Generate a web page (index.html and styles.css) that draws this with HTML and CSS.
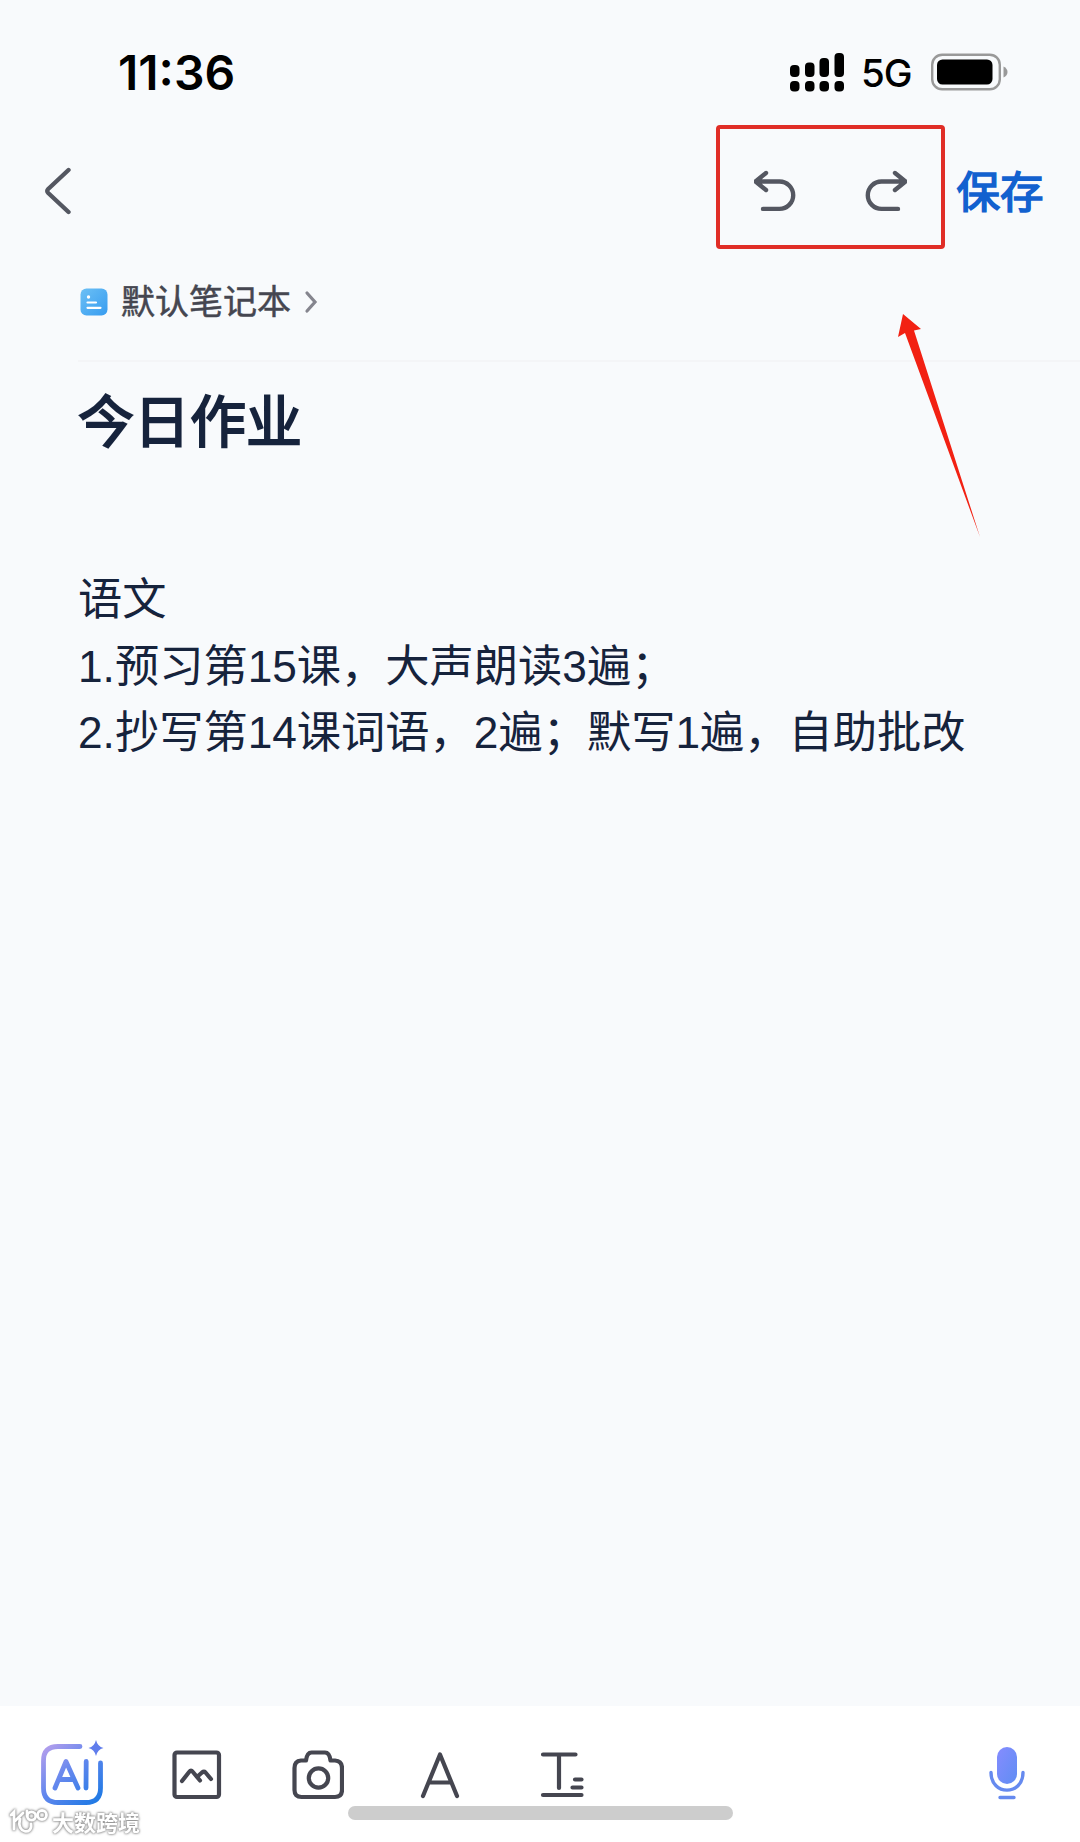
FILE: index.html
```html
<!DOCTYPE html>
<html lang="zh-CN">
  <head>
    <meta charset="UTF-8" />
    <meta name="viewport" content="width=device-width, initial-scale=1.0" />
    <link rel="stylesheet" href="styles.css">
    <title>今日作业</title>
  </head>
  <body>
    <div class="screen">
      <div class="status-bar">
        <span class="time">11:36</span>
        <div class="status-icons">
          <svg class="signal" width="54" height="39" viewBox="0 0 54 39">
            <rect x="0" y="12" width="9.500" height="12" rx="4" />
            <rect x="15" y="9.500" width="9.500" height="14.500" rx="4" />
            <rect x="29.500" y="5" width="9.500" height="19" rx="4" />
            <rect x="44.500" y="0" width="9.500" height="24" rx="4" />
            <rect x="0" y="28" width="9.500" height="10.500" rx="4" />
            <rect x="15" y="28" width="9.500" height="10.500" rx="4" />
            <rect x="29.500" y="28" width="9.500" height="10.500" rx="4" />
            <rect x="44.500" y="28" width="9.500" height="10.500" rx="4" />
          </svg>
          <span class="network">5G</span>
          <svg class="battery" width="77" height="38" viewBox="0 0 77 38">
            <rect x="1.200" y="1.700" width="67.600" height="34.600" rx="10" fill="none" stroke="#999" stroke-width="2.400" />
            <rect x="6" y="6.500" width="55.500" height="25" rx="5.500" />
            <path d="M72.500 13.500q4 2 4 5.500t-4 5.500z" fill="#999" />
          </svg>
        </div>
      </div>

      <div class="nav-bar">
        <button class="icon-button back">
          <svg width="28" height="48" viewBox="0 0 28 48">
            <path d="M24.500 3L4.200 22q-2 2 0 4L24.500 45" />
          </svg>
        </button>
        <div class="history">
          <button class="icon-button">
            <svg width="42" height="42" viewBox="0 0 42 42">
              <path d="M12 3L1.500 11.500L12 20M1.500 11.500H25.500a13.700 13.700 0 0 1 0 27.400H9" />
            </svg>
          </button>
          <button class="icon-button">
            <svg width="42" height="42" viewBox="0 0 42 42">
              <path d="M30 3L40.500 11.500L30 20M40.500 11.500H16.500a13.700 13.700 0 0 0 0 27.400H33" />
            </svg>
          </button>
        </div>
        <button class="save">保存</button>
      </div>

      <div class="notebook">
        <svg width="28" height="28" viewBox="0 0 28 28">
          <defs>
            <linearGradient id="book" x1="0" y1="0" x2="1" y2="1">
              <stop offset="0" stop-color="#6cc0f5" />
              <stop offset="1" stop-color="#379cf0" />
            </linearGradient>
          </defs>
          <rect x="0.500" y="0.500" width="27" height="27" rx="6" fill="url(#book)" />
          <circle cx="8.500" cy="9" r="1.700" fill="#fff" />
          <path d="M7.500 14.500H16M7.500 19.800H20.500" stroke="#fff" stroke-width="2.200" stroke-linecap="round" />
        </svg>
        <span class="notebook-name">默认笔记本</span>
        <svg width="14" height="24" viewBox="0 0 14 24">
          <path d="M3 3L11 12L3 21" fill="none" stroke="#85858e" stroke-width="3.200" stroke-linecap="round" />
        </svg>
      </div>

      <div class="note">
        <h1>今日作业</h1>
        <div class="content">
          <p>语文</p>
          <p>1.预习第15课，大声朗读3遍；</p>
          <p>2.抄写第14课词语，2遍；默写1遍，自助批改</p>
        </div>
      </div>

      <div class="toolbar">
        <div class="tools">
          <svg class="ai" width="64" height="68" viewBox="0 0 64 68">
            <defs>
              <linearGradient id="ai" gradientUnits="userSpaceOnUse" x1="4" y1="4" x2="58" y2="64">
                <stop offset="0" stop-color="#b9a0ec" />
                <stop offset="0.450" stop-color="#6688ee" />
                <stop offset="1" stop-color="#1c79e4" />
              </linearGradient>
            </defs>
            <g fill="none" stroke="url(#ai)" stroke-width="4.800" stroke-linecap="round" stroke-linejoin="round">
              <path d="M40 6.500H18Q3.500 6.500 3.500 21V48Q3.500 62.500 18 62.500H46Q60.500 62.500 60.500 48V23" />
              <path d="M15 48L26 21.500L38 48M19 39.500H34M46.200 21.500L46 48" />
            </g>
            <path d="M56 0q1.500 6.500 7.500 8q-6 1.500-7.500 8q-1.500-6.500-7.500-8q6-1.500 7.500-8z" fill="#607dec" />
          </svg>
          <svg width="50" height="50" viewBox="0 0 50 50">
            <rect x="2.500" y="2.500" width="44.500" height="44.500" rx="2.500" />
            <path d="M10 31L17.500 21.500Q19 19.500 20.500 21.500L28 30.500M25.500 26.500L30 22.500Q32 21 33.500 22.500L39 29" />
          </svg>
          <svg width="52" height="50" viewBox="0 0 52 50">
            <path d="M9 10.500H14Q15 2.500 19.500 2.500H33Q37.500 2.500 38.500 10.500H43Q50 11 50 18V40Q50 47 43 47H9.500Q2.500 47 2.500 40V18Q2.500 11 9 10.500z" />
            <circle cx="26.500" cy="28" r="9.700" />
          </svg>
          <svg width="40" height="50" viewBox="0 0 40 50">
            <path d="M3 46L20 4.500L37 46M9 32.500H31" />
          </svg>
          <svg width="44" height="50" viewBox="0 0 44 50">
            <path d="M3 4.500H35.500M19 4.500V38M3 45H41.500M35 29.500H41.500M32.500 37.500H41.500" />
          </svg>
        </div>
        <svg class="mic" width="38" height="56" viewBox="0 0 38 56">
          <defs>
            <linearGradient id="mic" x1="0" y1="0" x2="1" y2="1">
              <stop offset="0" stop-color="#858cff" />
              <stop offset="1" stop-color="#608df3" />
            </linearGradient>
          </defs>
          <rect x="9" y="1" width="20" height="37" rx="10" fill="url(#mic)" />
          <path d="M3 26.500C3 50 35 50 35 26.500M12 51.500H26" fill="none" stroke="#668aef" stroke-width="3.400" stroke-linecap="round" />
        </svg>
        <div class="home-indicator"></div>
      </div>

      <!-- pointer to the undo / redo buttons -->
      <svg class="pointer" width="84" height="226" viewBox="0 0 84 226">
        <path d="M5 0L23 15L16 16.500L82 223L7 19L0 23z" fill="#f22113" />
      </svg>

      <div class="watermark">
        <svg width="41" height="26" viewBox="0 0 41 26">
          <g fill="none" stroke-linecap="round">
            <path d="M2 7L5 4V21M14 5L6 13M11 11C7 26 24 27 22 16M18 3V8" />
            <circle cx="22.500" cy="8" r="4.200" />
            <circle cx="33" cy="7" r="4.500" />
          </g>
        </svg>
        <span>大数跨境</span>
      </div>
    </div>
  </body>
</html>
```

FILE: styles.css
```css
* {
  box-sizing: border-box;
}

body {
  margin: 0;
  font-family: "Liberation Sans", "Noto Sans CJK SC", sans-serif;
  background: #f8fafc;
}

h1,
p {
  margin: 0;
}

button {
  padding: 0;
  border: none;
  background: none;
  font-family: inherit;
}

svg {
  display: block;
  flex-shrink: 0;
}

.screen {
  position: relative;
  display: flex;
  flex-direction: column;
  width: 1080px;
  height: 1842px;
  overflow: hidden;
}

.status-bar {
  display: flex;
  align-items: center;
  justify-content: space-between;
  height: 125px;
  padding: 19px 72px 0 118px;
  font-family: Inter, sans-serif;
  color: #000;
}

.time {
  font-size: 48px;
  font-weight: 600;
}

.status-icons {
  display: flex;
  align-items: center;
}

.network {
  width: 52px;
  margin: 2px 18px 0 17px;
  font-size: 38.5px;
  font-weight: 500;
  letter-spacing: -1px;
}

.nav-bar {
  display: flex;
  align-items: center;
  height: 124px;
  padding: 0 36px 0 44px;
}

.icon-button svg {
  fill: none;
  stroke: #545761;
  stroke-width: 4.4;
  stroke-linecap: round;
  stroke-linejoin: round;
}

.back {
  margin-top: 7px;
}

.history {
  display: flex;
  align-items: center;
  justify-content: space-between;
  width: 229px;
  height: 124px;
  margin-left: auto;
  padding: 8px 34px 0;
  border: 4px solid #e02d26;
  border-radius: 4px;
}

.save {
  width: 88px;
  margin: 4px 0 0 11px;
  font-size: 43.5px;
  font-weight: 400;
  white-space: nowrap;
  color: #1261cf;
  -webkit-text-stroke: 1.6px #1261cf;
}

.notebook {
  display: flex;
  align-items: center;
  height: 113px;
  margin-left: 78px;
  padding: 0 0 5px 2px;
  border-bottom: 2px solid #f4f5f7;
}

.notebook-name {
  margin: 0 13px 0 13px;
  font-size: 34px;
  line-height: 50px;
  color: #454650;
  -webkit-text-stroke: 0.5px #454650;
}

.note {
  flex: 1;
  padding: 19px 78px 0;
  color: #16233c;
}

.note h1 {
  font-size: 56px;
  font-weight: 400;
  line-height: 84px;
  -webkit-text-stroke: 2px #16233c;
}

.content {
  margin-top: 102px;
  font-size: 44.25px;
  line-height: 66.7px;
  white-space: nowrap;
}

.toolbar {
  position: relative;
  display: flex;
  align-items: flex-start;
  justify-content: space-between;
  height: 136px;
  padding: 34px 54px 0 40px;
  background: #fff;
}

.tools {
  display: flex;
  align-items: center;
}

.tools svg:not(.ai) {
  margin-top: 1px;
  fill: none;
  stroke: #454650;
  stroke-width: 4.2;
  stroke-linecap: round;
  stroke-linejoin: round;
}

.tools svg:nth-child(2) {
  margin-left: 68px;
}

.tools svg:nth-child(3) {
  margin-left: 70px;
}

.tools svg:nth-child(4) {
  margin-left: 76px;
}

.tools svg:nth-child(5) {
  margin-left: 80px;
}

.mic {
  margin-top: 6px;
}

.home-indicator {
  position: absolute;
  left: 348px;
  bottom: 22px;
  width: 385px;
  height: 14px;
  border-radius: 7px;
  background: #cdcdcd;
}

.pointer {
  position: absolute;
  left: 898px;
  top: 314px;
}

.watermark {
  position: absolute;
  left: 9px;
  bottom: 7px;
  display: flex;
  align-items: center;
  gap: 2px;
  height: 28px;
  font-size: 22px;
  font-weight: 700;
  color: #fff;
  filter: drop-shadow(0 0 1px #888) drop-shadow(0 0 1px #aaa);
}

.watermark svg {
  stroke: #fff;
  stroke-width: 2.8;
}
```
